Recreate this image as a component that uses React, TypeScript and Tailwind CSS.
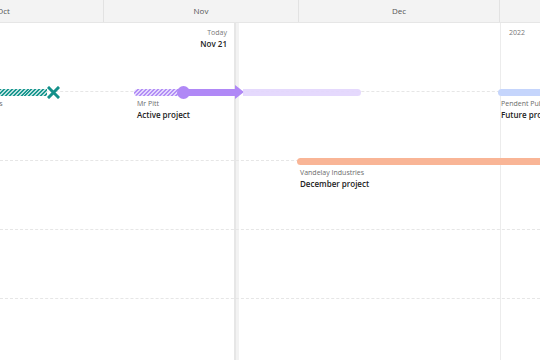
import React from 'react';

const hatchTeal =
  'bg-[repeating-linear-gradient(135deg,#1b9790_0px,#1b9790_1.4px,#bde2df_1.4px,#bde2df_2.8px)]';
const hatchPurple =
  'bg-[repeating-linear-gradient(135deg,#b28ef6_0px,#b28ef6_1.4px,#e4d8fd_1.4px,#e4d8fd_2.8px)]';

function Labels({ client, title }: { client: string; title?: string }) {
  return (
    <div className="mt-[1px] pl-[3px] whitespace-nowrap leading-none">
      <div className="text-[7px] text-[#6b6b6b]">{client}</div>
      {title && <div className="mt-[4px] text-[8px] font-semibold text-[#222]">{title}</div>}
    </div>
  );
}

function Row({ children }: { children?: React.ReactNode }) {
  return (
    <div className="relative h-[69px]">
      <div className="h-[35px] border-b border-dashed border-[#e6e6e6]" />
      {children}
    </div>
  );
}

export default function App() {
  return (
    <div className="relative w-[540px] h-[360px] overflow-hidden bg-white font-['Open_Sans',sans-serif]">
      {/* month header */}
      <div className="flex h-[23px] ml-[-96px] bg-[#f3f3f3] border-b border-[#e6e6e6] text-[8px] text-[#555]">
        <div className="w-[200px] shrink-0 flex items-center justify-center border-r border-[#e2e2e2]">Oct</div>
        <div className="w-[195px] shrink-0 flex items-center justify-center border-r border-[#e2e2e2]">Nov</div>
        <div className="w-[201px] shrink-0 flex items-center justify-center border-r border-[#e2e2e2]">Dec</div>
        <div className="w-[200px] shrink-0 flex items-center justify-center">Jan</div>
      </div>

      <div className="relative h-[337px]">
        {/* today marker + year marker */}
        <div className="absolute top-0 bottom-0 left-[234px] w-[5px] bg-[#f2f2f2] border-l-2 border-[#e6e6e6]" />
        <div className="absolute top-0 bottom-0 left-[500px] w-px bg-[#ececec]" />

        <div className="relative flex h-[34px] pt-[6px] leading-none">
          <div className="w-[227px] text-right">
            <div className="text-[7px] text-[#777]">Today</div>
            <div className="mt-[4px] text-[8px] font-semibold text-[#222]">Nov 21</div>
          </div>
          <div className="ml-[282px] text-[7px] text-[#777]">2022</div>
        </div>

        <Row>
          {/* past project */}
          <div className="absolute top-[28px] left-[-68px] flex flex-col">
            <div className="flex items-center h-[14px]">
              <div className={`w-[115px] h-[7px] ${hatchTeal}`} />
              <svg width="13" height="13" viewBox="0 0 13 13">
                <path d="M2 2 L11 11 M11 2 L2 11" stroke="#14908a" strokeWidth="3" strokeLinecap="square" />
              </svg>
            </div>
            <Labels client="Globex Corporations" title="Past project" />
          </div>

          {/* active project */}
          <div className="absolute top-[28px] left-[134px] flex flex-col">
            <div className="flex items-center h-[14px]">
              <div className={`w-[48px] h-[7px] rounded-l-full ${hatchPurple}`} />
              <div className="relative w-[13px] h-[13px] -ml-[5px] -mr-[6px] rounded-full bg-[#b088f6]" />
              <div className="w-[51px] h-[7px] bg-[#b088f6]" />
              <svg width="9" height="14" viewBox="0 0 9 14" className="-mr-[1px]">
                <path d="M0 0 L9 7 L0 14 Z" fill="#b088f6" />
              </svg>
              <div className="w-[118px] h-[7px] rounded-r-full bg-[#e2d5fd]/90" />
            </div>
            <Labels client="Mr Pitt" title="Active project" />
          </div>

          {/* future project */}
          <div className="absolute top-[28px] left-[498px] flex flex-col">
            <div className="flex items-center h-[14px]">
              <div className="w-[80px] h-[7px] rounded-l-full bg-[#c5d5fc]" />
            </div>
            <Labels client="Pendent Publishing" title="Future project" />
          </div>
        </Row>

        <Row>
          <div className="absolute top-[28px] left-[297px] flex flex-col">
            <div className="flex items-center h-[14px]">
              <div className="w-[280px] h-[7px] rounded-l-full bg-[#f9b596]" />
            </div>
            <Labels client="Vandelay Industries" title="December project" />
          </div>
        </Row>

        <Row />
        <Row />
      </div>
    </div>
  );
}
